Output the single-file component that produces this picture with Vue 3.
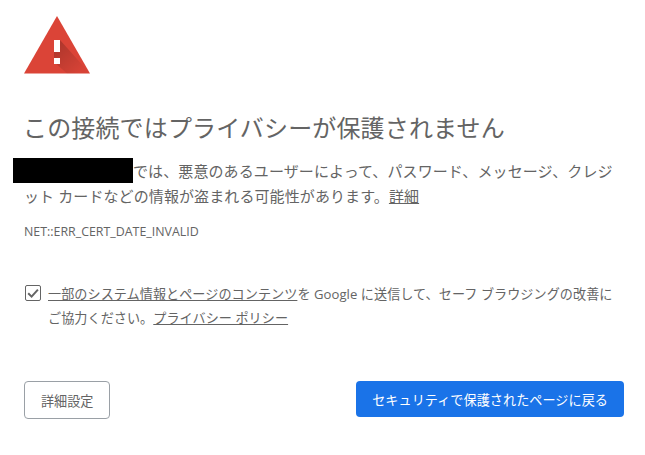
<template>
  <div class="interstitial">
    <!-- warning icon -->
    <svg class="warn-icon" width="66" height="58" viewBox="0 0 66 58">
      <defs>
        <linearGradient id="warn-shadow" x1="32" y1="30" x2="56" y2="56" gradientUnits="userSpaceOnUse">
          <stop offset="0" stop-color="#000" stop-opacity="0.2" />
          <stop offset="1" stop-color="#000" stop-opacity="0.02" />
        </linearGradient>
      </defs>
      <polygon points="33,0 66,57.5 0,57.5" fill="#db4437" />
      <polygon points="36,24 66,57.5 43,57.5 30,46 30,24" fill="url(#warn-shadow)" />
      <rect x="30" y="24" width="6" height="12" fill="#fff" />
      <rect x="30" y="42" width="6" height="6" fill="#fff" />
    </svg>

    <h1 class="title">この接続ではプライバシーが保護されません</h1>

    <p class="message">
      <span class="redacted"></span>では、悪意のあるユーザーによって、パスワード、メッセージ、クレジット カードなどの情報が盗まれる可能性があります。<a class="link">詳細</a>
    </p>
    <div class="error-code">NET::ERR_CERT_DATE_INVALID</div>

    <div class="opt-in">
      <label class="check" :class="{ off: !optIn }" @click="optIn = !optIn">
        <svg v-if="optIn" width="14" height="14" viewBox="0 0 14 14">
          <path d="M2.2 7.2 5.6 10.6 11.9 3.6" fill="none" stroke="#646464" stroke-width="2" />
        </svg>
      </label>
      <p class="opt-text">
        <a class="link">一部のシステム情報とページのコンテンツ</a>を Google に送信して、セーフ ブラウジングの改善にご協力ください。<a class="link">プライバシー ポリシー</a>
      </p>
    </div>

    <div class="actions">
      <button class="btn secondary">詳細設定</button>
      <button class="btn primary">セキュリティで保護されたページに戻る</button>
    </div>
  </div>
</template>

<script setup>
import { ref } from 'vue'

const optIn = ref(true)
</script>

<style>
html,
body {
  margin: 0;
  background: #fff;
}
</style>

<style scoped>
.interstitial {
  width: 600px;
  padding: 16px 21px 0 24px;
  color: #646464;
  font-family: "Open Sans", "Noto Sans CJK JP", sans-serif;
  font-size: 15px;
}

.warn-icon {
  display: block;
}

.title {
  margin: 36px 0 0 -1px;
  font-size: 24px;
  letter-spacing: 0.15px;
  font-weight: 400;
  line-height: 36px;
  white-space: nowrap;
}

.message {
  margin: 13px 0 0;
  line-height: 25px;
  letter-spacing: 0.1px;
}

.redacted {
  display: inline-block;
  width: 120px;
  height: 25px;
  margin-top: -1px;
  margin-left: -11px;
  background: #000;
  vertical-align: top;
}

.link {
  text-decoration: underline;
  color: #646464;
}

.error-code {
  margin-top: 15px;
  font-size: 12.4px;
  line-height: 16px;
}

.opt-in {
  display: flex;
  margin-top: 45px;
  gap: 7px;
}

.check {
  flex: none;
  width: 14px;
  height: 14px;
  margin-left: 1px;
  border: 1px solid #646464;
  border-radius: 2px;
  display: flex;
}

.opt-text {
  margin: -3px 0 0;
  max-width: 571px;
  font-size: 13.125px;
  letter-spacing: 0.05px;
  line-height: 24px;
}

.actions {
  display: flex;
  justify-content: space-between;
  align-items: flex-start;
  margin-top: 51px;
}

.btn {
  font-family: inherit;
  font-size: 13.125px;
  border-radius: 4px;
  padding: 0 16px;
}

.secondary {
  height: 38px;
  background: #fff;
  border: 1px solid #9aa0a6;
  color: #646464;
}

.primary {
  height: 36px;
  padding: 0 16px;
  letter-spacing: 0.05px;
  background: #1a73e8;
  border: none;
  color: #fff;
}
</style>
